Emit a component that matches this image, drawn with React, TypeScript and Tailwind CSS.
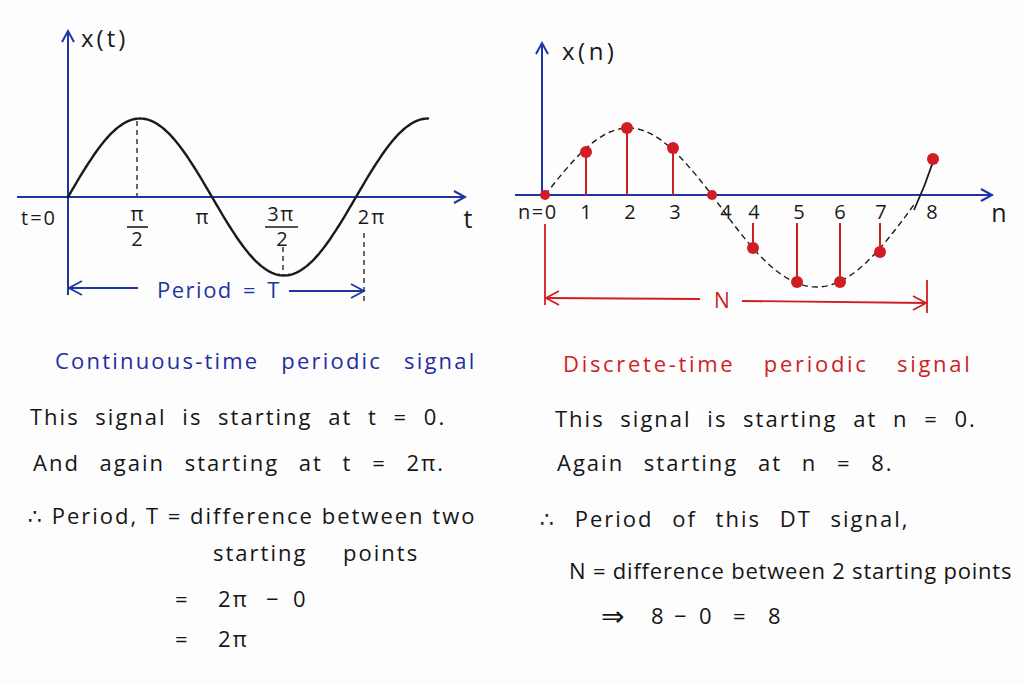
const BLUE = "#1f35a3"
const RED = "#cf1d24"
const INK = "#1a1a1a"
const FONT = "'Open Sans', 'DejaVu Sans', sans-serif"

function sinePath() {
  const pts: string[] = []
  for (let x = 68; x <= 428; x += 2) {
    const y = 197 - 78.5 * Math.sin((2 * Math.PI * (x - 68)) / 288)
    pts.push(`${x},${y.toFixed(1)}`)
  }
  return "M" + pts.join(" L")
}

function dashedPath() {
  const pts: string[] = []
  for (let x = 545; x <= 712; x += 2) {
    pts.push(`${x},${(195 - 67 * Math.sin((Math.PI * (x - 545)) / 167)).toFixed(1)}`)
  }
  for (let x = 714; x <= 916; x += 2) {
    pts.push(`${x},${(195 + 92 * Math.sin((Math.PI * (x - 712)) / 209)).toFixed(1)}`)
  }
  return "M" + pts.join(" L")
}

function ContinuousChart() {
  return (
    <svg viewBox="0 0 512 330" className="h-[330px] w-[512px]" style={{ fontFamily: FONT }}>
      {/* axes */}
      <line x1="68" y1="33" x2="68" y2="295" stroke={BLUE} strokeWidth="2" />
      <path d="M62 42 L68 31 L74 42" fill="none" stroke={BLUE} strokeWidth="2" />
      <line x1="17" y1="197" x2="464" y2="197" stroke={BLUE} strokeWidth="2" />
      <path d="M454 191 L465 197 L454 203" fill="none" stroke={BLUE} strokeWidth="2" />
      <text x="81" y="47" fontSize="24" letterSpacing="3" fill={INK}>x(t)</text>

      {/* dashed guides */}
      <line x1="137" y1="121" x2="137" y2="196" stroke={INK} strokeWidth="1.3" strokeDasharray="5 4" />
      <line x1="283" y1="247" x2="283" y2="276" stroke={INK} strokeWidth="1.3" strokeDasharray="5 4" />
      <line x1="364" y1="233" x2="364" y2="303" stroke={INK} strokeWidth="1.3" strokeDasharray="5 4" />

      <path d={sinePath()} fill="none" stroke={INK} strokeWidth="2.4" strokeLinecap="round" />

      {/* tick labels */}
      <text x="21" y="225" fontSize="20" letterSpacing="2" fill={INK}>t=0</text>
      <text x="137" y="221" fontSize="20" fill={INK} textAnchor="middle">π</text>
      <line x1="127" y1="227" x2="148" y2="227" stroke={INK} strokeWidth="1.6" />
      <text x="137" y="246" fontSize="20" fill={INK} textAnchor="middle">2</text>
      <text x="202" y="224" fontSize="20" fill={INK} textAnchor="middle">π</text>
      <text x="281" y="221" fontSize="20" letterSpacing="1.5" fill={INK} textAnchor="middle">3π</text>
      <line x1="265" y1="227" x2="298" y2="227" stroke={INK} strokeWidth="1.6" />
      <text x="282" y="246" fontSize="20" fill={INK} textAnchor="middle">2</text>
      <text x="372" y="224" fontSize="20" letterSpacing="2" fill={INK} textAnchor="middle">2π</text>
      <text x="468" y="228" fontSize="25" fill={INK} textAnchor="middle">t</text>

      {/* period arrow */}
      <line x1="69" y1="288" x2="138" y2="288" stroke={BLUE} strokeWidth="1.8" />
      <path d="M82 281 L69 288 L82 295" fill="none" stroke={BLUE} strokeWidth="1.8" />
      <text x="157" y="298" fontSize="22" letterSpacing="1.5" wordSpacing="3" fill={BLUE}>Period = T</text>
      <line x1="289" y1="291" x2="363" y2="291" stroke={BLUE} strokeWidth="1.8" />
      <path d="M351 284 L364 291 L351 298" fill="none" stroke={BLUE} strokeWidth="1.8" />
    </svg>
  )
}

const upper = [
  { x: 586, y: 152 },
  { x: 627, y: 128 },
  { x: 673, y: 148 },
]
const lower = [
  { x: 753, y: 248 },
  { x: 797, y: 282 },
  { x: 840, y: 282 },
  { x: 880, y: 252 },
]
const nLabels: [string, number][] = [
  ["1", 586],
  ["2", 630],
  ["3", 675],
  ["4", 726],
  ["4", 754],
  ["5", 799],
  ["6", 840],
  ["7", 881],
  ["8", 932],
]

function DiscreteChart() {
  return (
    <svg viewBox="512 0 512 330" className="h-[330px] w-[512px]" style={{ fontFamily: FONT }}>
      <line x1="542" y1="45" x2="542" y2="195" stroke={BLUE} strokeWidth="2" />
      <path d="M536 54 L542 43 L548 54" fill="none" stroke={BLUE} strokeWidth="2" />
      <line x1="515" y1="195" x2="991" y2="195" stroke={BLUE} strokeWidth="2" />
      <path d="M981 189 L992 195 L981 201" fill="none" stroke={BLUE} strokeWidth="2" />
      <text x="562" y="60" fontSize="24" letterSpacing="3.5" fill={INK}>x(n)</text>

      <path d={dashedPath()} fill="none" stroke={INK} strokeWidth="1.4" strokeDasharray="6 4" />
      <path d="M914 210 Q925 186 933 162" fill="none" stroke={INK} strokeWidth="1.8" />

      {upper.map((p) => (
        <line key={p.x} x1={p.x} y1="195" x2={p.x} y2={p.y} stroke={RED} strokeWidth="2" />
      ))}
      {lower.map((p) => (
        <line key={p.x} x1={p.x} y1="223" x2={p.x} y2={p.y} stroke={RED} strokeWidth="2" />
      ))}
      {[...upper, ...lower, { x: 933, y: 159 }].map((p) => (
        <circle key={"c" + p.x} cx={p.x} cy={p.y} r="6" fill={RED} />
      ))}
      <circle cx="545" cy="195" r="5" fill={RED} />
      <circle cx="712" cy="195" r="5" fill={RED} />

      <text x="518" y="219" fontSize="20" letterSpacing="1.5" fill={INK}>n=0</text>
      {nLabels.map(([t, x], i) => (
        <text key={i} x={x} y="219" fontSize="20" fill={INK} textAnchor="middle">
          {t}
        </text>
      ))}
      <text x="999" y="222" fontSize="25" fill={INK} textAnchor="middle">n</text>

      {/* period N */}
      <line x1="545" y1="224" x2="545" y2="305" stroke={RED} strokeWidth="1.8" />
      <line x1="546" y1="298" x2="700" y2="299" stroke={RED} strokeWidth="1.8" />
      <path d="M559 291 L546 298 L559 305" fill="none" stroke={RED} strokeWidth="1.8" />
      <text x="722" y="308" fontSize="21" fill={RED} textAnchor="middle">N</text>
      <line x1="742" y1="301" x2="926" y2="303" stroke={RED} strokeWidth="1.8" />
      <path d="M913 296 L926 303 L913 310" fill="none" stroke={RED} strokeWidth="1.8" />
      <line x1="927" y1="280" x2="927" y2="313" stroke={RED} strokeWidth="1.8" />
    </svg>
  )
}

export default function App() {
  return (
    <div
      className="grid h-[683px] w-[1024px] grid-cols-2 overflow-hidden bg-[#fdfdfd] text-[#161616]"
      style={{ fontFamily: FONT }}
    >
      <div className="flex flex-col">
        <ContinuousChart />
        <div className="mt-[15px] whitespace-nowrap pl-[55px] text-[22px] leading-[30px] tracking-[2.2px] [word-spacing:14px] text-[#1f2ea0]">
          Continuous-time periodic signal
        </div>
        <div className="whitespace-nowrap text-[22px] leading-[28px] tracking-[2px]">
          <div className="mt-[27px] pl-[30px] [word-spacing:8px]">This signal is starting at t = 0.</div>
          <div className="mt-[18px] pl-[33px] [word-spacing:12px]">And again starting at t = 2π.</div>
          <div className="mt-[25px] pl-[28px] [word-spacing:0px]">∴ Period, T = difference between two</div>
          <div className="mt-[9px] pl-[213px] [word-spacing:28px]">starting points</div>
          <div className="mt-[18px] flex pl-[175px]">
            <span className="w-[43px]">=</span>
            <span className="w-[48px]">2π</span>
            <span className="w-[27px]">−</span>
            <span>0</span>
          </div>
          <div className="mt-[12px] flex pl-[175px]">
            <span className="w-[43px]">=</span>
            <span>2π</span>
          </div>
        </div>
      </div>
      <div className="flex flex-col">
        <DiscreteChart />
        <div className="mt-[18px] whitespace-nowrap pl-[51px] text-[22px] leading-[30px] tracking-[2.7px] [word-spacing:20px] text-[#cf1d24]">
          Discrete-time periodic signal
        </div>
        <div className="whitespace-nowrap text-[22px] leading-[28px] tracking-[2px]">
          <div className="mt-[26px] pl-[43px] [word-spacing:8px]">This signal is starting at n = 0.</div>
          <div className="mt-[16px] pl-[45px] [word-spacing:12px]">Again starting at n = 8.</div>
          <div className="mt-[28px] pl-[28px] [word-spacing:11px]">∴ Period of this DT signal,</div>
          <div className="mt-[24px] pl-[57px] tracking-[0.8px] [word-spacing:0px]">
            N = difference between 2 starting points
          </div>
          <div className="mt-[17px] flex items-center pl-[89px]">
            <span className="w-[50px] text-[28px] leading-[28px]">⇒</span>
            <span className="w-[23px]">8</span>
            <span className="w-[25px]">−</span>
            <span className="w-[34px]">0</span>
            <span className="w-[35px]">=</span>
            <span>8</span>
          </div>
        </div>
      </div>
    </div>
  )
}
